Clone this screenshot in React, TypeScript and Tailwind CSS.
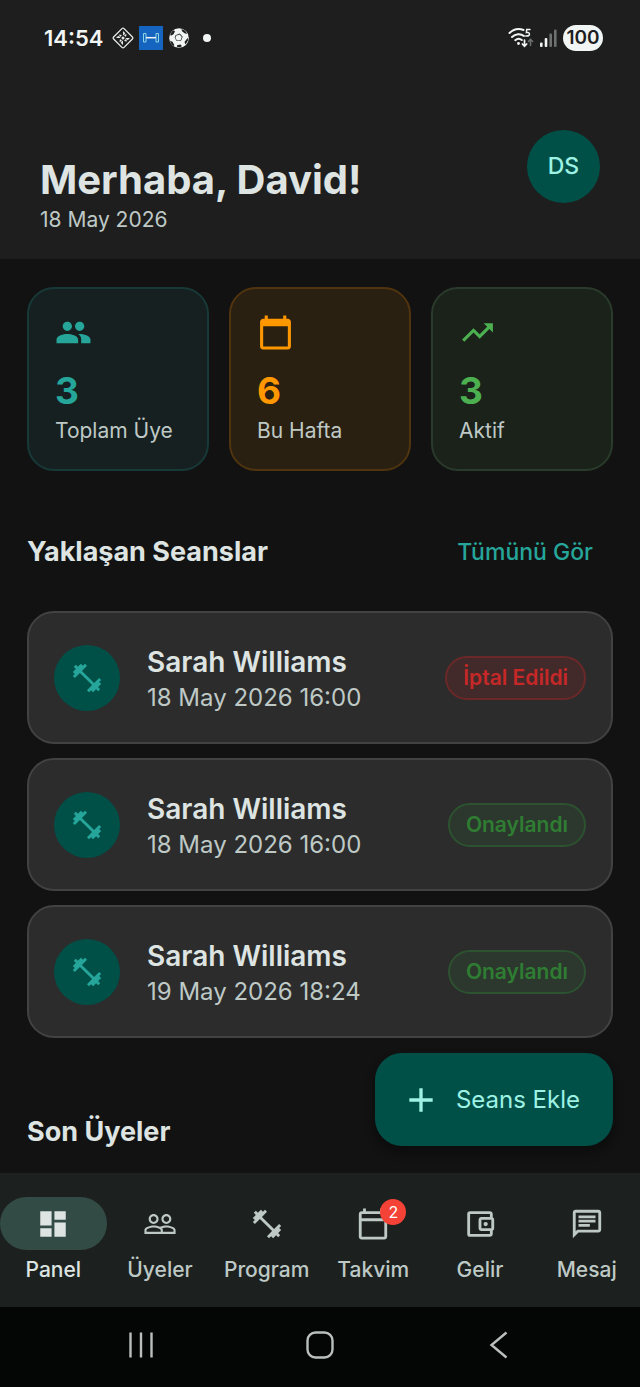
import React from 'react';
import {
  MdAdd,
  MdCalendarToday,
  MdDashboard,
  MdOutlineAccountBalanceWallet,
  MdOutlineCalendarToday,
  MdOutlineChat,
  MdPeople,
  MdPeopleOutline,
  MdTrendingUp,
} from 'react-icons/md';
import clsx from 'clsx';

type Icon = React.ComponentType<{ size?: number; className?: string }>;

interface Stat {
  label: string;
  value: number;
  icon: Icon;
  card: string;
  accent: string;
}

interface Session {
  id: number;
  name: string;
  date: string;
  status: 'cancelled' | 'confirmed';
}

interface NavItem {
  label: string;
  icon: Icon;
  badge?: number;
}

const Dumbbell: Icon = ({ size = 24, className }) => (
  <svg width={size} height={size} viewBox="0 0 24 24" fill="currentColor" className={className}>
    <path d="M20.57 14.86L22 13.43 20.57 12 17 15.57 8.43 7 12 3.43 10.57 2 9.14 3.43 7.71 2 5.57 4.14 4.14 2.71 2.71 4.14l1.43 1.43L2 7.71l1.43 1.43L2 10.57 3.43 12 7 8.43 15.57 17 12 20.57 13.43 22l1.43-1.43L16.29 22l2.14-2.14 1.43 1.43 1.43-1.43-1.43-1.43L22 16.29z" />
  </svg>
);

const stats: Stat[] = [
  { label: 'Toplam Üye', value: 3, icon: MdPeople, card: 'bg-[#162020] border-[#173937]', accent: 'text-[#26a69a]' },
  { label: 'Bu Hafta', value: 6, icon: MdCalendarToday, card: 'bg-[#2a2011] border-[#50340f]', accent: 'text-[#ff9800]' },
  { label: 'Aktif', value: 3, icon: MdTrendingUp, card: 'bg-[#1a221a] border-[#2a3b2c]', accent: 'text-[#4caf50]' },
];

const sessions: Session[] = [
  { id: 1, name: 'Sarah Williams', date: '18 May 2026 16:00', status: 'cancelled' },
  { id: 2, name: 'Sarah Williams', date: '18 May 2026 16:00', status: 'confirmed' },
  { id: 3, name: 'Sarah Williams', date: '19 May 2026 18:24', status: 'confirmed' },
];

const navItems: NavItem[] = [
  { label: 'Panel', icon: MdDashboard },
  { label: 'Üyeler', icon: MdPeopleOutline },
  { label: 'Program', icon: Dumbbell },
  { label: 'Takvim', icon: MdOutlineCalendarToday, badge: 2 },
  { label: 'Gelir', icon: MdOutlineAccountBalanceWallet },
  { label: 'Mesaj', icon: MdOutlineChat },
];

const StatusBar: React.FC = () => (
  <div className="flex h-[76px] items-center justify-between pl-11 pr-[37px]">
    <div className="flex items-center">
      <span className="text-[22px] font-semibold leading-7 text-[#f1f5f4]">14:54</span>
      <svg width="24" height="24" viewBox="0 0 24 24" fill="none" stroke="#e6ebea" className="ml-2">
        <rect x="4.6" y="4.6" width="14.8" height="14.8" rx="1.5" strokeWidth="1.3" transform="rotate(45 12 12)" />
        <path
          d="M12 5l2.300 2.300-2.300 2.300zM12 19l-2.300-2.300 2.300-2.300zM5 12l2.300-2.300 2.300 2.300zM19 12l-2.300 2.300-2.300-2.300zM8 8.500l3 .5-2 2.200zM16 15.500l-3-.5 2-2.200zM15.500 8l-.5 3-2.200-2zM8.500 16l.5-3 2.200 2z"
          fill="#e6ebea"
          stroke="none"
        />
        <circle cx="12" cy="12" r="1.500" fill="#e6ebea" stroke="none" />
      </svg>
      <svg width="24" height="24" viewBox="0 0 24 24" fill="none" className="ml-1 bg-[#1565c0]">
        <path d="M4.5 7.5H7V16H4.500zM17 7.500h2.500V16H17z" stroke="#8fd6e4" strokeWidth="1" />
        <path d="M7 11.700h10" stroke="#f1f5f4" strokeWidth="1.500" />
      </svg>
      <svg width="20" height="20" viewBox="0 0 20 20" className="ml-1.5">
        <circle cx="10" cy="10" r="9.800" fill="#f1f5f4" />
        <path
          d="M6.500 7.200l4.200-1.700 3 3.200-1.700 4-4.300.3-2-3.200zM1.200 6L4 2.300 6 3.200 4.500 6.200 1.800 7.800zM12.500 1l3.700 1.800 2 3-2.200-.300-3-2.300zM18.700 9.800l.3 2.800-2.500 4-1-2.600zM1 12.800l2.500 1 1.800 3.200-.8 1C2.700 16.800 1.500 15 1 12.800zM8 17.200l3.500-.7 1.500 1.700-2.500 1.100-2.500-.5z"
          fill="#1e1e1e"
          fillRule="evenodd"
        />
        <path d="M7 7.800l3.500-1.400 2.400 2.600-1.400 3.200-3.500.3-1.600-2.600z" fill="#f1f5f4" />
      </svg>
      <span className="ml-3.5 size-2 rounded-full bg-[#f1f5f4]" />
    </div>
    <div className="flex items-center gap-1.5">
      <svg width="26" height="22" viewBox="0 0 26 22" fill="none" stroke="#f1f5f4" strokeLinecap="round">
        <path d="M1.500 6C5.500 2.200 11 1.300 15.500 3M4 10c3.300-3.200 8.500-3.800 12-1M7.300 13.200c2-1.800 4.600-1.800 6.500-.2" strokeWidth="2" />
        <circle cx="10.500" cy="16.500" r="1.400" fill="#f1f5f4" stroke="none" />
        <path d="M22 2.500h-3.300l-.3 3c3.500-.8 4.500 3.500.3 3.500h-1" strokeWidth="1.500" />
        <path d="M16.500 13v6M14.300 17l2.200 2.300 2.200-2.300" strokeWidth="1.700" />
        <path d="M22.500 18.500v-6M20.400 14.500l2.100-2.200 2.100 2.200" stroke="#6d7170" strokeWidth="1.500" />
      </svg>
      <svg width="17" height="18" viewBox="0 0 17 18">
        <rect x="0" y="13.500" width="2.600" height="4.500" rx="1" fill="#f1f5f4" />
        <rect x="4.700" y="9" width="2.600" height="9" rx="1" fill="#f1f5f4" />
        <rect x="9.400" y="4.500" width="2.600" height="13.500" rx="1" fill="#6d7170" />
        <rect x="14" y="0.500" width="2.600" height="17.500" rx="1" fill="#6d7170" />
      </svg>
      <span className="flex h-[26px] w-10 items-center justify-center rounded-full bg-[#f1f5f4] text-[19px] font-semibold leading-6 text-[#1e1e1e]">
        100
      </span>
    </div>
  </div>
);

const StatCard: React.FC<{ stat: Stat }> = ({ stat }) => {
  const StatIcon = stat.icon;
  return (
    <div className={clsx('rounded-[27px] border-2 px-[26px] py-[25px]', stat.card)}>
      <StatIcon size={37} className={stat.accent} />
      <p className={clsx('mt-[13px] text-[37px] font-bold leading-[53px]', stat.accent)}>{stat.value}</p>
      <p className="whitespace-nowrap text-[21px] leading-[27px] text-[#bec9c6]">{stat.label}</p>
    </div>
  );
};

const SessionCard: React.FC<{ session: Session }> = ({ session }) => (
  <li className="flex h-[133px] items-center rounded-[27px] border-2 border-[#424242] bg-[#2c2c2c] px-[25px]">
    <span className="flex size-[66px] shrink-0 items-center justify-center rounded-full bg-[#005048] text-[#26a69a]">
      <Dumbbell size={34} />
    </span>
    <div className="ml-[27px] flex-1">
      <h3 className="text-[28px] font-semibold leading-10 text-[#dde4e2]">{session.name}</h3>
      <p className="text-2xl leading-8 text-[#bec9c6]">{session.date}</p>
    </div>
    <span
      className={clsx(
        'flex h-11 items-center rounded-full border-2 px-4 text-[21px] font-semibold',
        session.status === 'cancelled'
          ? 'border-[#6b2828] bg-[#432a2a] text-[#c62828]'
          : 'border-[#2c5230] bg-[#2c382d] text-[#2e7d32]'
      )}
    >
      {session.status === 'cancelled' ? 'İptal Edildi' : 'Onaylandı'}
    </span>
  </li>
);

const BottomNav: React.FC<{ active: string }> = ({ active }) => (
  <nav className="grid grid-cols-6 bg-[#1c211f] py-6">
    {navItems.map(({ label, icon: NavIcon, badge }) => (
      <button key={label} type="button" className={active === label ? 'text-[#dde4e2]' : 'text-[#bec9c6]'}>
        <span className={clsx('flex h-[53px] items-center justify-center rounded-full', active === label && 'bg-[#334b45]')}>
          <span className="relative">
            <NavIcon size={34} />
            {badge && (
              <span className="absolute -top-2 left-6 flex size-[26px] items-center justify-center rounded-full bg-[#f44336] text-base text-white">
                {badge}
              </span>
            )}
          </span>
        </span>
        <span className="mt-1.5 block text-[21px] font-medium leading-[27px]">{label}</span>
      </button>
    ))}
  </nav>
);

const SystemBar: React.FC = () => (
  <div className="grid h-20 grid-cols-3 place-items-center bg-[#040605] px-[51px] pb-1 text-[#b9bfbd]">
    <button type="button" aria-label="Recents">
      <svg width="28" height="28" viewBox="0 0 28 28" stroke="currentColor" strokeWidth="2.400">
        <path d="M3.500 1.500v25M14 1.500v25M24.500 1.500v25" />
      </svg>
    </button>
    <button type="button" aria-label="Home">
      <svg width="28" height="28" viewBox="0 0 28 28" fill="none" stroke="currentColor" strokeWidth="2.400">
        <rect x="1.500" y="1.500" width="25" height="25" rx="8" />
      </svg>
    </button>
    <button type="button" aria-label="Back">
      <svg width="28" height="28" viewBox="0 0 28 28" fill="none" stroke="currentColor" strokeWidth="2.400">
        <path d="M21.500 1.500L6.500 14l15 12.500" />
      </svg>
    </button>
  </div>
);

export default function App() {
  return (
    <div className="flex min-h-screen flex-col bg-[#121212] font-['Inter','Noto_Sans',sans-serif]">
      <header className="bg-[#1e1e1e] pb-[26px]">
        <StatusBar />
        <div className="flex items-start justify-between px-10 pt-[54px]">
          <div className="mt-[23px]">
            <h1 className="text-[40px] font-bold leading-[53px] text-[#dde4e2]">Merhaba, David!</h1>
            <p className="text-[21px] leading-[27px] text-[#bec9c6]">18 May 2026</p>
          </div>
          <span className="flex size-[73px] items-center justify-center rounded-full bg-[#005048] text-[23px] font-medium text-[#9ef2e4]">
            DS
          </span>
        </div>
      </header>

      <main className="relative flex-1 px-[27px] pt-7">
        <section className="grid grid-cols-3 gap-5">
          {stats.map((stat) => (
            <StatCard key={stat.label} stat={stat} />
          ))}
        </section>

        <section>
          <div className="mb-[19px] mt-[41px] flex h-20 items-center justify-between">
            <h2 className="text-[27px] font-bold text-[#dde4e2]">Yaklaşan Seanslar</h2>
            <button type="button" className="px-5 text-[23px] font-medium text-[#26a69a]">
              Tümünü Gör
            </button>
          </div>
          <ul className="flex flex-col gap-3.5">
            {sessions.map((session) => (
              <SessionCard key={session.id} session={session} />
            ))}
          </ul>
        </section>

        <h2 className="mb-[21px] mt-[74px] text-[27px] font-bold leading-10 text-[#dde4e2]">Son Üyeler</h2>

        <button
          type="button"
          className="absolute bottom-[27px] right-[27px] flex h-[93px] items-center gap-[15px] rounded-[27px] bg-[#005048] pl-[26px] pr-[33px] text-2xl text-[#9ef2e4] shadow-[0_6px_8px_2px_rgba(0,0,0,0.3)]"
        >
          <MdAdd size={40} />
          Seans Ekle
        </button>
      </main>

      <BottomNav active="Panel" />
      <SystemBar />
    </div>
  );
}
